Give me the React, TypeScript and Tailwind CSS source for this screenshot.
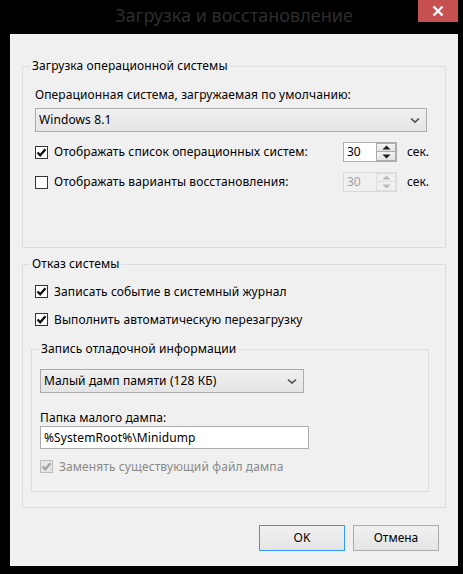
import React from 'react';

const font = { fontFamily: '"Noto Sans", "Open Sans", sans-serif' };

function Check({ checked, disabled }: { checked?: boolean; disabled?: boolean }) {
  return (
    <div
      className={
        'w-[13px] h-[13px] shrink-0 border flex items-center justify-center ' +
        (disabled ? 'border-[#bcbcbc] bg-[#e6e6e6]' : 'border-[#333333] bg-white')
      }
    >
      {checked && (
        <svg width="11" height="11" viewBox="0 0 11 11">
          <path
            d="M1.5 5.5 L4.2 8.3 L9.5 2.3"
            fill="none"
            stroke={disabled ? '#a3a3a3' : '#111111'}
            strokeWidth="2.4"
          />
        </svg>
      )}
    </div>
  );
}

function CheckRow({ label, checked, disabled }: { label: string; checked?: boolean; disabled?: boolean }) {
  return (
    <div className="flex items-center gap-[6px] h-[17px]">
      <Check checked={checked} disabled={disabled} />
      <span className={'text-[12px] leading-[16px] tracking-[0.1px] ' + (disabled ? 'text-[#8a8a8a]' : 'text-black')}>
        {label}
      </span>
    </div>
  );
}

function Chevron() {
  return (
    <svg width="10" height="7" viewBox="0 0 10 7">
      <path d="M1 1.5 L5 5.2 L9 1.5" fill="none" stroke="#505050" strokeWidth="1.6" />
    </svg>
  );
}

function Combo({ value, width }: { value: string; width: string }) {
  return (
    <div
      className={
        width +
        ' h-[24px] border border-[#acacac] bg-gradient-to-b from-[#f0f0f0] to-[#e5e5e5] flex items-center justify-between pl-[3px] pr-[6px]'
      }
    >
      <span className="text-[12px] leading-[16px] tracking-[0.1px] text-black">{value}</span>
      <Chevron />
    </div>
  );
}

function Arrow({ up, color }: { up?: boolean; color: string }) {
  return (
    <svg width="9" height="5" viewBox="0 0 9 5">
      <path d={up ? 'M0.5 4.5 L4.5 0.5 L8.5 4.5 Z' : 'M0.5 0.5 L4.5 4.5 L8.5 0.5 Z'} fill={color} />
    </svg>
  );
}

function Spin({ disabled }: { disabled?: boolean }) {
  const arrow = disabled ? '#b8b8b8' : '#1a1a1a';
  const btn = disabled
    ? 'border-[#e0e0e0] bg-[#f0f0f0]'
    : 'border-[#acacac] bg-gradient-to-b from-[#f2f2f2] to-[#e3e3e3]';
  return (
    <div
      className={
        'w-[54px] h-[20px] border flex ' +
        (disabled ? 'border-[#d9d9d9] bg-[#f0f0f0]' : 'border-[#acacac] bg-white')
      }
    >
      <span className={'flex-1 pl-[3px] text-[12px] leading-[18px] ' + (disabled ? 'text-[#a0a0a0]' : 'text-black')}>
        30
      </span>
      <div className="w-[20px] flex flex-col">
        <div className={'h-[9px] flex items-center justify-center border ' + btn}>
          <Arrow up color={arrow} />
        </div>
        <div className={'h-[9px] flex items-center justify-center border border-t-0 ' + btn}>
          <Arrow color={arrow} />
        </div>
      </div>
    </div>
  );
}

function Group({
  title,
  className,
  children,
}: {
  title: string;
  className: string;
  children: React.ReactNode;
}) {
  return (
    <div className={'relative border border-[#dcdcdc] ' + className}>
      <div className="absolute top-[-9px] left-[7px] px-[2px] bg-[#f0f0f0] text-[12px] leading-[16px] tracking-[0.1px] text-black">
        {title}
      </div>
      {children}
    </div>
  );
}

function DlgButton({ label, primary }: { label: string; primary?: boolean }) {
  return (
    <div
      className={
        'w-[86px] h-[26px] border flex items-center justify-center bg-gradient-to-b from-[#f0f0f0] to-[#e5e5e5] text-[12px] text-black ' +
        (primary ? 'border-[#3399ff]' : 'border-[#acacac]')
      }
    >
      {label}
    </div>
  );
}

export default function App() {
  return (
    <div className="w-[463px] h-[574px] bg-black overflow-hidden" style={font}>
      <div className="ml-[10px] w-[448px]">
        <div className="relative h-[34px] flex items-start justify-center">
          <span className="mt-[3px] text-[18px] leading-[24px] text-[#2e2e2e]">Загрузка и восстановление</span>
          <div className="absolute right-0 top-0 w-[40px] h-[22px] bg-[#c75050] flex items-center justify-center">
            <svg width="12" height="12" viewBox="0 0 12 12">
              <path d="M1.5 1.5 L10.5 10.5 M10.5 1.5 L1.5 10.5" stroke="#ffffff" strokeWidth="2.4" />
            </svg>
          </div>
        </div>

        <div className="h-[532px] bg-[#f0f0f0] pt-[32px] px-[12px]">
          <Group title="Загрузка операционной системы" className="h-[182px] pt-[20px] pl-[12px]">
            <div className="text-[12px] leading-[16px] tracking-[0.1px] text-black">
              Операционная система, загружаемая по умолчанию:
            </div>
            <div className="mt-[5px]">
              <Combo value="Windows 8.1" width="w-[392px]" />
            </div>
            <div className="mt-[10px] flex items-center h-[20px]">
              <div className="w-[308px]">
                <CheckRow label="Отображать список операционных систем:" checked />
              </div>
              <Spin />
              <span className="ml-[10px] text-[12px] leading-[16px] text-black">сек.</span>
            </div>
            <div className="mt-[10px] flex items-center h-[20px]">
              <div className="w-[308px]">
                <CheckRow label="Отображать варианты восстановления:" />
              </div>
              <Spin disabled />
              <span className="ml-[10px] text-[12px] leading-[16px] text-black">сек.</span>
            </div>
          </Group>

          <Group title="Отказ системы" className="mt-[16px] h-[244px] pt-[18px] pl-[12px]">
            <CheckRow label="Записать событие в системный журнал" checked />
            <div className="mt-[11px]">
              <CheckRow label="Выполнить автоматическую перезагрузку" checked />
            </div>
            <Group
              title="Запись отладочной информации"
              className="mt-[21px] ml-[-4px] w-[398px] h-[143px] pt-[19px] pl-[8px]"
            >
              <Combo value="Малый дамп памяти (128 КБ)" width="w-[264px]" />
              <div className="mt-[17px] text-[12px] leading-[16px] tracking-[0.1px] text-black">Папка малого дампа:</div>
              <div className="w-[269px] h-[23px] border border-[#acacac] bg-white flex items-center pl-[3px] text-[12px] tracking-[0.1px] text-black">
                %SystemRoot%\Minidump
              </div>
              <div className="mt-[9px]">
                <CheckRow label="Заменять существующий файл дампа" checked disabled />
              </div>
            </Group>
          </Group>

          <div className="mt-[17px] flex justify-end gap-[8px] pr-[7px]">
            <DlgButton label="OK" primary />
            <DlgButton label="Отмена" />
          </div>
        </div>
      </div>
    </div>
  );
}
